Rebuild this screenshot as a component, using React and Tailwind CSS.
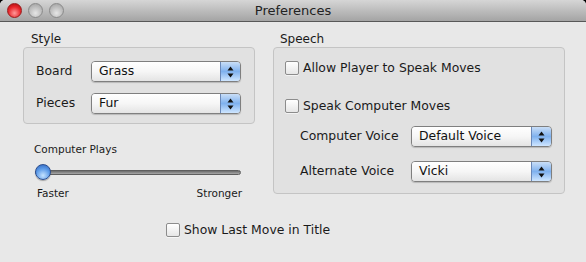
import React from 'react';

const FONT = { fontFamily: '"Lucida Grande", "DejaVu Sans", sans-serif' };

const Arrows = () => (
    <svg width="7" height="12" viewBox="0 0 7 12">
        <path d="M3.5 0.5 L6.5 4.5 L0.5 4.5 Z" fill="#111" />
        <path d="M3.5 11.5 L6.5 7.5 L0.5 7.5 Z" fill="#111" />
    </svg>
);

function Popup({ value, width }) {
    return (
        <div className={`flex h-[21px] ${width} rounded-[4px] border border-[#7f7f7f] overflow-hidden shadow-[0_1px_1px_rgba(0,0,0,0.18)]`}>
            <div className="flex-1 flex items-center pl-[7px] bg-gradient-to-b from-white via-[#f6f6f6] to-[#e4e4e4] text-[12.4px] text-[#111]">
                {value}
            </div>
            <div className="w-[20px] flex items-center justify-center border-l border-[#6a88b8] bg-gradient-to-b from-[#c9def7] via-[#7fb1ee] to-[#cfe6ff]">
                <Arrows />
            </div>
        </div>
    );
}

const Checkbox = () => (
    <div className="w-[14px] h-[14px] rounded-[2px] border border-[#8c8c8c] bg-gradient-to-b from-white to-[#e6e6e6] shadow-[0_1px_0_rgba(255,255,255,0.6)]" />
);

const Light = ({ red }) => (
    <div className={`w-[15px] h-[15px] rounded-full border ${red ? 'border-[#9a1a1a] bg-[radial-gradient(circle_at_50%_70%,#ff9a9a,#e8262b_55%,#a50a0a)]' : 'border-[#8a8a8a] bg-[radial-gradient(circle_at_50%_70%,#e6e6e6,#bdbdbd_55%,#9c9c9c)]'}`} />
);

export default function App() {
    return (
        <div className="w-[586px] h-[262px] bg-black" style={FONT}>
            <div className="w-full h-full rounded-t-[5px] overflow-hidden bg-[#e8e8e8] text-[#1a1a1a]">
                <div className="h-[22px] grid grid-cols-[1fr_auto_1fr] items-center bg-gradient-to-b from-[#d6d6d6] to-[#a4a4a4] border-b border-[#585858]">
                    <div className="flex items-center gap-[6px] pl-[7px]">
                        <Light red />
                        <Light />
                        <Light />
                    </div>
                    <div className="text-[13px] text-[#222]">Preferences</div>
                    <div />
                </div>

                <div className="flex gap-[18px] pl-[23px] pt-[10px]">
                    <div className="w-[232px] flex flex-col">
                        <div className="h-[15px] leading-[15px] ml-[8px] text-[12px]">Style</div>
                        <div className="h-[77px] rounded-[4px] border border-[#c4c4c4] bg-[#e1e1e1] pt-[13px]">
                            <div className="flex items-center h-[21px]">
                                <div className="w-[67px] pl-[12px] text-[12.4px]">Board</div>
                                <Popup value="Grass" width="w-[150px]" />
                            </div>
                            <div className="flex items-center h-[21px] mt-[11px]">
                                <div className="w-[67px] pl-[12px] text-[12.4px]">Pieces</div>
                                <Popup value="Fur" width="w-[150px]" />
                            </div>
                        </div>
                        <div className="mt-[19px] ml-[11px] h-[13px] leading-[13px] text-[10.5px]">Computer Plays</div>
                        <div className="relative mt-[8px] ml-[12px] w-[206px] h-[16px] flex items-center">
                            <div className="w-full h-[5px] rounded-full bg-gradient-to-b from-[#6b6b6b] to-[#a9a9a9] border border-[#5e5e5e]" />
                            <div className="absolute left-0 top-0 w-[16px] h-[16px] rounded-full border border-[#2d4f8f] bg-[radial-gradient(circle_at_50%_75%,#c6e3ff,#5b9ae8_55%,#2a5fb8)] shadow-[0_1px_1px_rgba(0,0,0,0.3)]" />
                        </div>
                        <div className="mt-[7px] ml-[14px] w-[205px] h-[13px] leading-[13px] flex justify-between text-[10.5px]">
                            <span>Faster</span>
                            <span>Stronger</span>
                        </div>
                    </div>

                    <div className="w-[292px] flex flex-col">
                        <div className="h-[15px] leading-[15px] ml-[7px] text-[12px]">Speech</div>
                        <div className="h-[147px] rounded-[4px] border border-[#c4c4c4] bg-[#e1e1e1] pt-[13px]">
                            <div className="flex items-center gap-[4px] h-[14px] pl-[11px]">
                                <Checkbox />
                                <span className="text-[12.4px]">Allow Player to Speak Moves</span>
                            </div>
                            <div className="flex items-center gap-[4px] h-[14px] pl-[11px] mt-[24px]">
                                <Checkbox />
                                <span className="text-[12.4px]">Speak Computer Moves</span>
                            </div>
                            <div className="flex items-center h-[21px] mt-[13px] pl-[26px]">
                                <div className="w-[111px] text-[12.4px]">Computer Voice</div>
                                <Popup value="Default Voice" width="w-[141px]" />
                            </div>
                            <div className="flex items-center h-[21px] mt-[14px] pl-[26px]">
                                <div className="w-[111px] text-[12.4px]">Alternate Voice</div>
                                <Popup value="Vicki" width="w-[141px]" />
                            </div>
                        </div>
                    </div>
                </div>

                <div className="flex items-center gap-[4px] h-[14px] ml-[166px] mt-[23px]">
                    <Checkbox />
                    <span className="text-[12.4px]">Show Last Move in Title</span>
                </div>
            </div>
        </div>
    );
}
